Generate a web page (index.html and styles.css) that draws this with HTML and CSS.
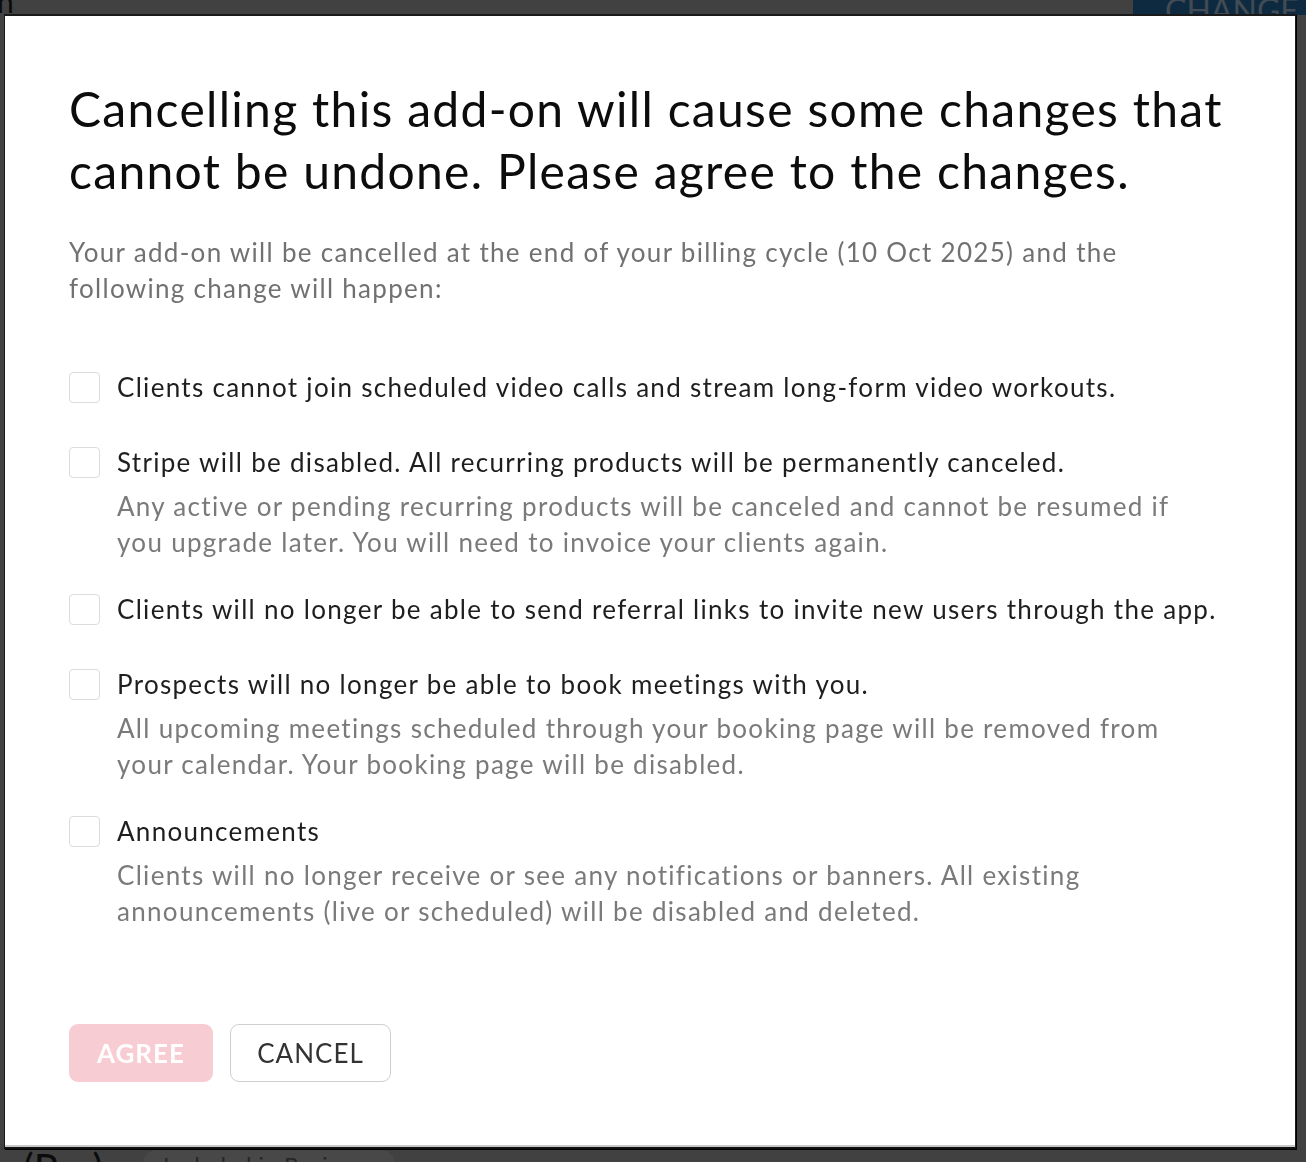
FILE: index.html
```html
<!DOCTYPE html>
<html lang="en">
<head>
<meta charset="utf-8">
<title>Cancel add-on</title>
<link rel="stylesheet" href="styles.css">
</head>
<body>
<div class="page">
  <div class="page-top">
    <span class="page-title">n</span>
    <span class="change-btn">CHANGE PLAN</span>
  </div>
  <div class="page-bottom">
    <span class="plan-name">g (Pro)</span>
    <span class="plan-badge">Included in Business</span>
  </div>
</div>

<div class="modal" role="dialog">
  <h1 class="modal-title">Cancelling this add-on will cause some changes that cannot be undone. Please agree to the changes.</h1>
  <p class="modal-sub">Your add-on will be cancelled at the end of your billing cycle (10 Oct 2025) and the following change will happen:</p>

  <ul class="changes">
    <li class="change">
      <span class="box"></span>
      <div class="change-text">
        <div class="change-main">Clients cannot join scheduled video calls and stream long-form video workouts.</div>
      </div>
    </li>
    <li class="change">
      <span class="box"></span>
      <div class="change-text">
        <div class="change-main">Stripe will be disabled. All recurring products will be permanently canceled.</div>
        <div class="change-desc">Any active or pending recurring products will be canceled and cannot be resumed if you upgrade later. You will need to invoice your clients again.</div>
      </div>
    </li>
    <li class="change">
      <span class="box"></span>
      <div class="change-text">
        <div class="change-main">Clients will no longer be able to send referral links to invite new users through the app.</div>
      </div>
    </li>
    <li class="change">
      <span class="box"></span>
      <div class="change-text">
        <div class="change-main">Prospects will no longer be able to book meetings with you.</div>
        <div class="change-desc">All upcoming meetings scheduled through your booking page will be removed from your calendar. Your booking page will be disabled.</div>
      </div>
    </li>
    <li class="change">
      <span class="box"></span>
      <div class="change-text">
        <div class="change-main">Announcements</div>
        <div class="change-desc">Clients will no longer receive or see any notifications or banners. All existing announcements (live or scheduled) will be disabled and deleted.</div>
      </div>
    </li>
  </ul>

  <div class="actions">
    <button class="btn btn-agree" disabled>AGREE</button>
    <button class="btn btn-cancel">CANCEL</button>
  </div>
</div>
</body>
</html>
```

FILE: styles.css
```css
* { box-sizing: border-box; }

html, body {
  margin: 0;
  padding: 0;
}

body {
  width: 1306px;
  height: 1162px;
  overflow: hidden;
  background: #414141;
  font-family: Lato, "Noto Sans", "Liberation Sans", sans-serif;
}

/* background page (dimmed by overlay) */
.page {
  height: 1162px;
  display: flex;
  flex-direction: column;
  justify-content: space-between;
}

.page-top {
  height: 15px;
  display: flex;
  justify-content: space-between;
  align-items: flex-start;
  overflow: hidden;
}

.page-title {
  font-size: 30px;
  line-height: 15px;
  margin-top: -6px;
  margin-left: -3px;
  color: #0b0b0b;
}

.change-btn {
  width: 173px;
  height: 15px;
  background: #0e2a40;
  color: #424b53;
  font-size: 32px;
  line-height: 20px;
  padding-left: 32px;
  white-space: nowrap;
  overflow: hidden;
}

.page-bottom {
  height: 14px;
  display: flex;
  align-items: flex-start;
  overflow: hidden;
}

.plan-name {
  font-size: 40px;
  line-height: 44px;
  margin-top: -2px;
  color: #0b0b0b;
  margin-left: -8px;
  white-space: nowrap;
}

.plan-badge {
  margin-left: 40px;
  margin-top: 2px;
  height: 30px;
  padding: 0 20px;
  border-radius: 14px;
  background: #484848;
  color: #262626;
  font-size: 22px;
  line-height: 30px;
  letter-spacing: 0.8px;
  white-space: nowrap;
}

/* modal */
.modal {
  position: fixed;
  left: 4px;
  top: 14px;
  width: 1292px;
  height: 1135px;
  background: #ffffff;
  border: 1px solid #1a1a1a;
  border-top-width: 2px;
  border-bottom: 2px solid #111;
  box-shadow: inset 0 -2px 0 #c9c9c9, 1px 1px 0 #000;
  padding: 62px 64px 0 64px;
}

.modal-title {
  margin: 0;
  font-size: 48px;
  line-height: 62px;
  font-weight: 400;
  color: #0c0c0c;
  letter-spacing: 1.3px;
}

.modal-sub {
  margin: 32px 0 0 0;
  padding-right: 20px;
  font-size: 26px;
  line-height: 36px;
  color: #717171;
  letter-spacing: 1.3px;
}

.changes {
  list-style: none;
  margin: 63px 0 0 0;
  padding: 0;
  display: flex;
  flex-direction: column;
  gap: 31px;
}

.change {
  display: flex;
  align-items: flex-start;
  gap: 17px;
}

.box {
  flex: none;
  width: 31px;
  height: 31px;
  margin-top: 3px;
  border: 1.5px solid #dcdcdc;
  border-radius: 4px;
  background: #fff;
}

.change-text {
  flex: 1;
}

.change-main {
  font-size: 26px;
  line-height: 36px;
  color: #1e1e1e;
  margin-bottom: 8px;
  letter-spacing: 1.3px;
}

.change-desc {
  padding-right: 24px;
  font-size: 26px;
  line-height: 36px;
  color: #7a7a7a;
  letter-spacing: 1.3px;
}

.actions {
  margin-top: 95px;
  display: flex;
  gap: 17px;
}

.btn {
  height: 58px;
  border-radius: 9px;
  font-family: inherit;
  font-size: 26px;
  letter-spacing: 1px;
  padding: 0 20px;
  cursor: pointer;
}

.btn-agree {
  width: 144px;
  background: #f8ccd3;
  color: #ffffff;
  border: none;
  font-weight: 700;
}

.btn-cancel {
  width: 161px;
  background: #ffffff;
  color: #333;
  border: 1.5px solid #cfcfcf;
}
```
